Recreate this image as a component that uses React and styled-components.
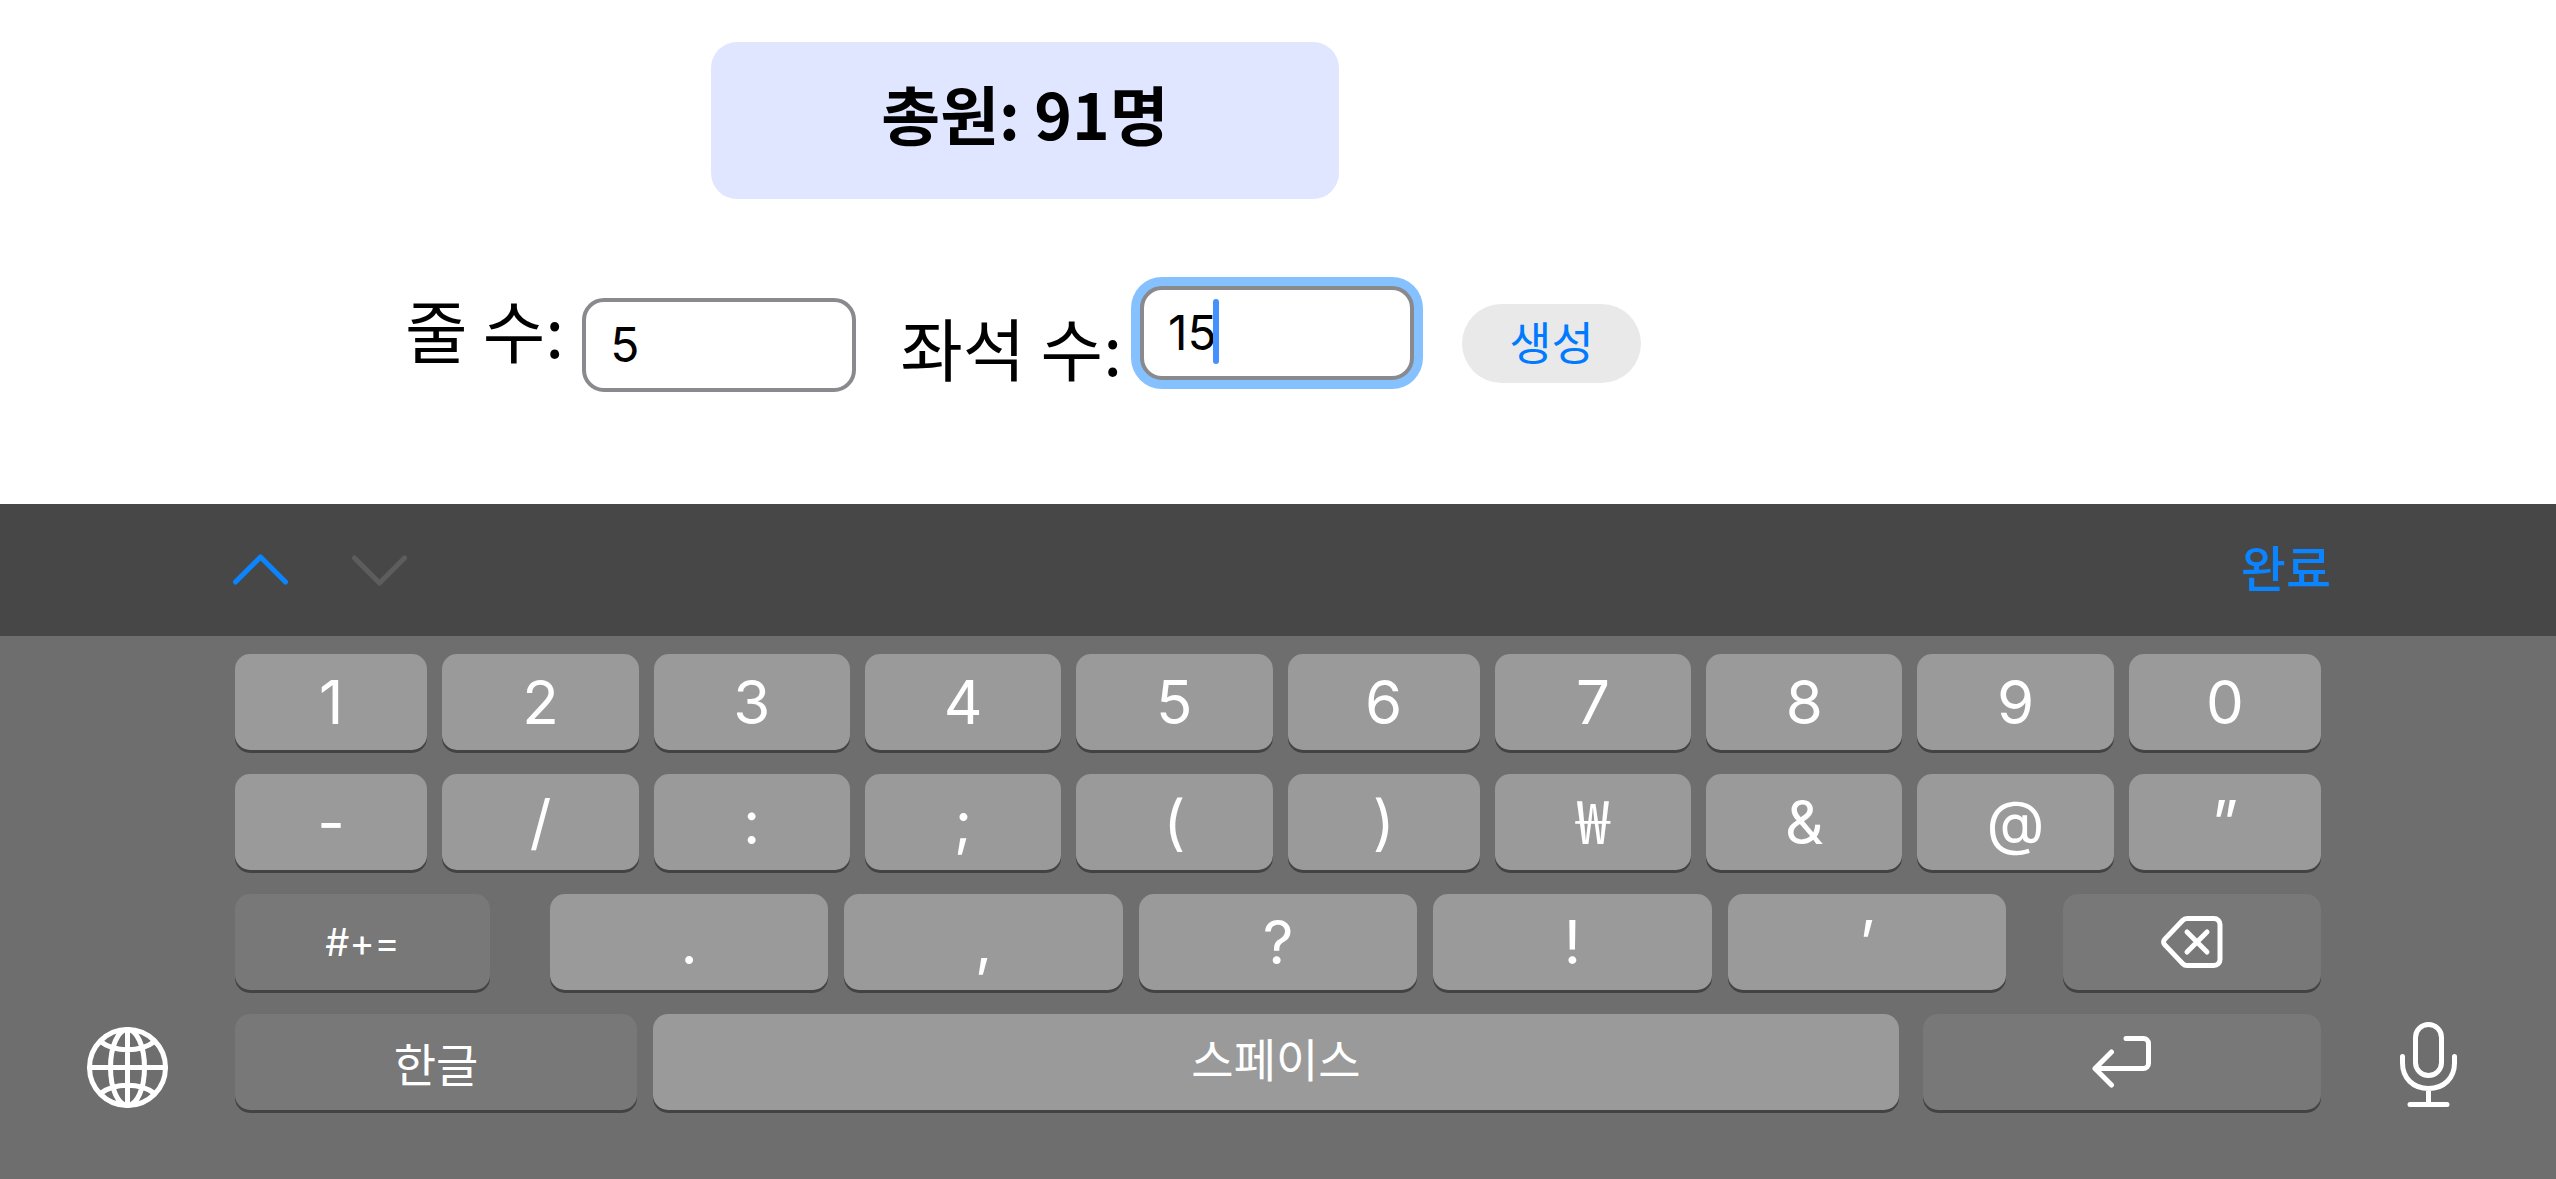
import { useState } from "react";
import styled, { createGlobalStyle } from "styled-components";

export default function App() {
    const [rows, setRows] = useState("5");
    const [seats, setSeats] = useState("15");

    return (
        <>
            <GlobalStyle/>
            <SCPage>
                <SCMain>
                    <SCTotal>총원: 91명</SCTotal>
                    <SCForm onSubmit={(e) => e.preventDefault()}>
                        <SCField>
                            <SCLabel htmlFor="rows">줄 수:</SCLabel>
                            <SCInputBox $drop="12px">
                                <SCInput id="rows" inputMode="numeric" value={rows} onChange={(e) => setRows(e.target.value)}/>
                            </SCInputBox>
                        </SCField>
                        <SCField>
                            <SCLabel htmlFor="seats" $drop="18px">좌석 수:</SCLabel>
                            <SCInputBox>
                                <SCInput id="seats" $active inputMode="numeric" value={seats} onChange={(e) => setSeats(e.target.value)}/>
                                <SCCaret/>
                            </SCInputBox>
                        </SCField>
                        <SCCreate type="submit">생성</SCCreate>
                    </SCForm>
                </SCMain>
                <SCToolbar>
                    <SCArrows>
                        <SCToolButton aria-label="이전"><ArrowIcon up/></SCToolButton>
                        <SCToolButton aria-label="다음" disabled><ArrowIcon/></SCToolButton>
                    </SCArrows>
                    <SCToolButton>완료</SCToolButton>
                </SCToolbar>
                <SCKeyboard>
                    <SCSide>
                        <SCToolButton aria-label="키보드 전환"><GlobeIcon/></SCToolButton>
                    </SCSide>
                    <SCKeys>
                        <SCKeyGrid>
                            {numberKeys.map((key) => <SCKey key={key}>{key}</SCKey>)}
                        </SCKeyGrid>
                        <SCKeyGrid>
                            {symbolKeys.map((key) => key === "₩"
                                ? <SCKoreanKey key={key}>{key}</SCKoreanKey>
                                : <SCKey key={key}>{key}</SCKey>
                            )}
                        </SCKeyGrid>
                        <SCKeyRow>
                            <SCKey $dark $grow={255} $size="38px">#+=</SCKey>
                            <SCPunctuation>
                                {punctuationKeys.map((key) => <SCKey key={key}>{key}</SCKey>)}
                            </SCPunctuation>
                            <SCKey $dark $grow={258} aria-label="지우기"><DeleteIcon/></SCKey>
                        </SCKeyRow>
                        <SCKeyRow>
                            <SCKey $dark $grow={402} $size="46px">한글</SCKey>
                            <SCSpaceKey $grow={1246} $size="46px">스페이스</SCSpaceKey>
                            <SCKey $dark $grow={398} aria-label="엔터"><ReturnIcon/></SCKey>
                        </SCKeyRow>
                    </SCKeys>
                    <SCSide>
                        <SCToolButton aria-label="받아쓰기"><MicIcon/></SCToolButton>
                    </SCSide>
                </SCKeyboard>
            </SCPage>
        </>
    )
}

const numberKeys = ["1", "2", "3", "4", "5", "6", "7", "8", "9", "0"];
const symbolKeys = ["-", "/", ":", ";", "(", ")", "₩", "&", "@", "”"];
const punctuationKeys = [".", ",", "?", "!", "’"];

function ArrowIcon({ up }) {
    return (
        <SCIcon width="55" height="34" viewBox="0 0 55 34">
            <path d={up ? "M2.5 29L27.5 4L52.5 29" : "M2.5 5L27.5 30L52.5 5"}/>
        </SCIcon>
    )
}

function GlobeIcon() {
    return (
        <SCIcon width="86" height="86" viewBox="0 0 86 86">
            <circle cx="42.5" cy="43.5" r="38"/>
            <ellipse cx="42.5" cy="43.5" rx="17" ry="38"/>
            <path d="M42.5 5.5V81.5M4.5 43.5H80.5M15.5 17.5C29.5 28.5 55.5 28.5 69.5 17.5M15.5 69.5C29.5 58.5 55.5 58.5 69.5 69.5"/>
        </SCIcon>
    )
}

function DeleteIcon() {
    return (
        <SCIcon width="62" height="52" viewBox="0 0 62 52">
            <path d="M26 2.5H53a6 6 0 0 1 6 6V43.5a6 6 0 0 1-6 6H26a6 6 0 0 1-4.2-1.8L3.6 28.6a3.8 3.8 0 0 1 0-5.2L21.8 4.3A6 6 0 0 1 26 2.5Z"/>
            <path d="M26 16L46 36M46 16L26 36"/>
        </SCIcon>
    )
}

function ReturnIcon() {
    return (
        <SCIcon width="60" height="52" viewBox="0 0 60 52">
            <path d="M34 2.5H51.5a5 5 0 0 1 5 5V27.5a5 5 0 0 1-5 5H3M19.5 16L3 32.5L19.5 49"/>
        </SCIcon>
    )
}

function MicIcon() {
    return (
        <SCIcon width="57" height="88" viewBox="0 0 57 88">
            <rect x="15.5" y="2.5" width="26" height="51" rx="13"/>
            <path d="M2.5 34.5V41C2.5 56 13 66.5 28.5 66.5S54.5 56 54.5 41V34.5M28.5 66.5V82.5M10 82.5H47"/>
        </SCIcon>
    )
}

const GlobalStyle = createGlobalStyle `
    * {
        box-sizing: border-box;
    }

    body {
        margin: 0;
        background: #ffffff;
        font-family: 'Noto Sans CJK KR', sans-serif;
    }

    button, input {
        font-family: 'Inter', 'Noto Sans CJK KR', sans-serif;
    }
`

const SCPage = styled.div `
    display: flex;
    flex-direction: column;
    width: 100%;
    min-height: 100vh;
`

const SCMain = styled.main `
    display: flex;
    flex-direction: column;
    flex: 1 0 auto;
    align-items: center;
    padding: 42px 506px 104px 0;
`

const SCTotal = styled.h1 `
    width: 628px;
    margin: 0 0 87px;
    padding-bottom: 16px;
    border-radius: 26px;
    background: #e0e6ff;
    font-size: 64px;
    font-weight: 700;
    line-height: 141px;
    text-align: center;
    color: #000000;
`

const SCForm = styled.form `
    display: flex;
    align-items: flex-start;
    gap: 44px;
    min-height: 114px;
    padding-right: 4px;
`

const SCField = styled.div `
    display: flex;
    align-items: flex-start;
    gap: 18px;
`

const SCLabel = styled.label `
    margin-top: ${({ $drop }) => $drop || 0};
    font-size: 68px;
    line-height: 86px;
    white-space: nowrap;
    color: #000000;
`

const SCInputBox = styled.div `
    position: relative;
    margin-top: ${({ $drop }) => $drop || 0};
`

const SCInput = styled.input `
    display: block;
    width: 274px;
    height: 94px;
    padding: 0 24px 2px;
    border: 4px solid #8a8a8e;
    border-radius: 22px;
    outline: none;
    background: #ffffff;
    box-shadow: ${({ $active }) => $active ? "0 0 0 9px #85c1ff" : "none"};
    font-size: 48px;
    color: #000000;
`

const SCCaret = styled.span `
    position: absolute;
    top: 13px;
    left: 73px;
    width: 6px;
    height: 65px;
    border-radius: 3px;
    background: #4591ff;
`

const SCCreate = styled.button `
    align-self: center;
    width: 179px;
    height: 79px;
    margin-left: 4px;
    padding: 0;
    border: none;
    border-radius: 40px;
    background: #e9e9e9;
    font-size: 46px;
    line-height: 64px;
    color: #007aff;
`

const SCToolbar = styled.div `
    display: flex;
    justify-content: space-between;
    align-items: center;
    height: 132px;
    padding: 0 225px 0 233px;
    background: #474747;
`

const SCArrows = styled.div `
    display: flex;
    gap: 64px;
`

const SCToolButton = styled.button `
    display: flex;
    align-items: center;
    padding: 0;
    border: none;
    background: none;
    font-size: 49px;
    font-weight: 500;
    line-height: 64px;
    color: #0a84ff;

    &:disabled {
        color: #5d5d5d;
    }
`

const SCKeyboard = styled.div `
    display: flex;
    padding: 18px 20px 69px;
    background: #6e6e6e;
`

const SCSide = styled.div `
    display: flex;
    justify-content: center;
    align-items: flex-end;
    width: 215px;

    ${SCToolButton} {
        color: #ffffff;
    }
`

const SCKeys = styled.div `
    display: flex;
    flex: 1;
    flex-direction: column;
    gap: 24px;
`

const SCKeyGrid = styled.div `
    display: grid;
    grid-template-columns: 192fr repeat(4, 196fr) 192fr repeat(3, 196fr) 192fr;
    gap: 15px;
`

const SCKeyRow = styled.div `
    display: flex;
    gap: 16px;
`

const SCKey = styled.button `
    display: flex;
    flex: ${({ $grow }) => $grow || 1} 1 0;
    justify-content: center;
    align-items: center;
    min-width: 0;
    height: 96px;
    padding: 0;
    border: none;
    border-radius: 15px;
    background: ${({ $dark }) => $dark ? "#787878" : "#9a9a9a"};
    box-shadow: 0 3px 0 #434343;
    font-size: ${({ $size }) => $size || "60px"};
    color: #ffffff;
`

const SCKoreanKey = styled(SCKey) `
    padding-bottom: 10px;
    font-family: 'Noto Sans CJK KR', sans-serif;
`

const SCSpaceKey = styled(SCKoreanKey) `
    margin-right: 8px;
`

const SCPunctuation = styled.div `
    display: flex;
    flex: 1456 1 0;
    gap: 16px;
    margin: 0 41px 0 44px;
`

const SCIcon = styled.svg `
    display: block;
    fill: none;
    stroke: currentColor;
    stroke-width: 5px;
    stroke-linecap: round;
    stroke-linejoin: round;
`
